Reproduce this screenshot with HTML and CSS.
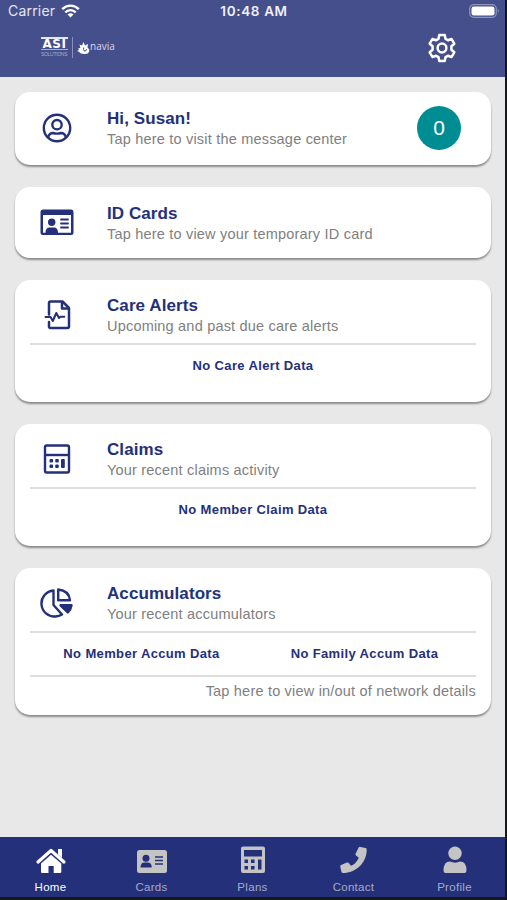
FILE: index.html
```html
<!DOCTYPE html>
<html lang="en">
<head>
<meta charset="utf-8">
<title>Home</title>
<link rel="stylesheet" href="styles.css">
</head>
<body>
<div class="app">
  <header class="header">
    <div class="status">
      <div class="carrier"><span>Carrier</span>
        <svg width="19" height="14" viewBox="0 0 19 14"><g fill="none" stroke="#fff" stroke-width="2.4"><path d="M1.2 5.2C6 .4 13 .4 17.800 5.200"/><path d="M4.300 8.300C7.400 5.400 11.600 5.400 14.700 8.300"/></g><path d="M6.500 10.500Q9.500 8 12.500 10.500L9.500 13.500Z" fill="#fff"/></svg>
      </div>
      <div class="time">10:48 AM</div>
      <div class="power"><svg width="31" height="14" viewBox="0 0 31 14"><rect x=".7" y=".7" width="26.600" height="12.600" rx="4" fill="none" stroke="#8e95bb" stroke-width="1.200"/><rect x="2.500" y="2.500" width="23" height="9" rx="2.300" fill="#fff"/><path d="M28.800 5q2 2 0 4z" fill="#8e95bb"/></svg></div>
    </div>
    <div class="brand-row">
      <div class="brand">
        <div class="asi"><b>ASI</b><small>SOLUTIONS</small></div>
        <div class="navia">
          <svg width="13" height="15" viewBox="0 0 13 15"><path d="M1 8.500 3.400 8 2.500 4.500 5 5.500 6.500 2 8 5.500 11 4 10.500 7.500Q13 9 12.300 11.500 11 14.500 7 14 3.500 14 1.800 11.800L0 11 2 10Z" fill="#fff"/><path d="M6.800 7.500q-1 2.400.5 3.500 2 .4 2.300-1.800" fill="none" stroke="#454f8b" stroke-width="1"/></svg>
          <span>navia</span>
        </div>
      </div>
      <svg class="gear" width="30" height="30" viewBox="0 0 30 30" fill="none" stroke="#fff" stroke-width="2.500" stroke-linejoin="round"><path d="M12.300 2h5.400l.8 3.800 2.400 1.400 3.700-1.200 2.700 4.700-2.900 2.600v3.400l2.900 2.600-2.700 4.700-3.700-1.200-2.400 1.400-.8 3.800h-5.400l-.8-3.800-2.400-1.400L5.400 24l-2.700-4.700 2.900-2.600v-3.400l-2.900-2.600L5.400 6l3.700 1.200 2.400-1.400z"/><circle cx="15" cy="15" r="4.400"/></svg>
    </div>
  </header>

  <main class="cards">
    <section class="card greeting">
      <div class="card-head">
        <svg class="icon" width="34" height="34" viewBox="0 0 34 34" fill="none" stroke="#24307a" stroke-width="2.400"><circle cx="17" cy="17" r="13.200"/><circle cx="17" cy="13.700" r="4.700"/><path d="M8 26.300q1.500-4.300 5-4.300 4 1.300 8 0 3.500 0 5 4.300"/></svg>
        <div class="copy"><h2>Hi, Susan!</h2><p>Tap here to visit the message center</p></div>
        <div class="count">0</div>
      </div>
    </section>

    <section class="card idcard">
      <div class="card-head">
        <svg class="icon" width="34" height="34" viewBox="0 0 34 34"><path fill="#24307a" fill-rule="evenodd" d="M3 4.500H31Q33.500 4.500 33.500 7V27.500Q33.500 30 31 30H3Q.5 30 .5 27.500V7Q.5 4.500 3 4.500ZM3 10V27.700H31V10Z"/><g fill="#24307a"><circle cx="11.700" cy="17.200" r="3.700"/><path d="M5.500 28q0-5.500 4-5.500h4.500q4 0 4 5.500z"/></g><path d="M21 14.500h7M21 18.500h7M21 22.500h7" stroke="#24307a" stroke-width="1.800" stroke-linecap="round"/></svg>
        <div class="copy"><h2>ID Cards</h2><p>Tap here to view your temporary ID card</p></div>
      </div>
    </section>

    <section class="card detail">
      <div class="card-head">
        <svg class="icon" width="34" height="34" viewBox="0 0 34 34" fill="none" stroke="#24307a" stroke-width="2.500" stroke-linejoin="round" stroke-linecap="round"><path d="M9 16.500V5Q9 3.500 10.500 3.500H22.500L29 10V28.500Q29 30 27.500 30H10.500Q9 30 9 28.500V24"/><path d="M22 4V10.500H28.500"/><path d="M5.500 19h5l2.300 4 3.500-8 2.700 5 1.300-1.200h4" stroke-width="2"/></svg>
        <div class="copy"><h2>Care Alerts</h2><p>Upcoming and past due care alerts</p></div>
      </div>
      <div class="notice"><strong>No Care Alert Data</strong></div>
    </section>

    <section class="card detail">
      <div class="card-head">
        <svg class="icon" width="34" height="34" viewBox="0 0 34 34"><g fill="none" stroke="#24307a" stroke-width="2.400"><rect x="5" y="3.500" width="24" height="27" rx="1.700"/><path d="M5 13h24"/></g><g fill="#24307a"><rect x="9.500" y="17" width="3.600" height="3.600" rx="1"/><rect x="15.200" y="17" width="3.600" height="3.600" rx="1"/><rect x="9.500" y="22.500" width="3.600" height="3.600" rx="1"/><rect x="15.200" y="22.500" width="3.600" height="3.600" rx="1"/><rect x="21" y="17" width="3.800" height="9.100" rx="1"/></g></svg>
        <div class="copy"><h2>Claims</h2><p>Your recent claims activity</p></div>
      </div>
      <div class="notice"><strong>No Member Claim Data</strong></div>
    </section>

    <section class="card accum">
      <div class="card-head">
        <svg class="icon" width="34" height="34" viewBox="0 0 34 34" fill="none" stroke="#24307a" stroke-width="2.400" stroke-linejoin="round"><path d="M13.500 4.500A13 13 0 0 0 15.500 30.500Q19 30.300 22 28.500L13.500 19Z"/><path d="M18.200 3.500V14.300H30Q29 4.500 18.200 3.500Z"/><path d="M20.500 19.300H31.500Q31 23.500 27.800 26.400Z" fill="#24307a"/></svg>
        <div class="copy"><h2>Accumulators</h2><p>Your recent accumulators</p></div>
      </div>
      <div class="notice split"><strong>No Member Accum Data</strong><strong>No Family Accum Data</strong></div>
      <p class="more">Tap here to view in/out of network details</p>
    </section>
  </main>

  <nav class="tabs">
    <a class="tab active"><svg width="32" height="30" viewBox="0 0 32 30"><path d="M3 17 16 5.500 29 17" fill="none" stroke="#fff" stroke-width="3.200" stroke-linecap="round" stroke-linejoin="round"/><path d="M23 4h4v9l-4-3.500zM6 18.500 16 9.800l10.300 8.700V27Q26.300 28 25 28H18.700V21h-5.200v7H7.300Q6 28 6 27Z" fill="#fff"/></svg><span>Home</span></a>
    <a class="tab"><svg width="32" height="30" viewBox="0 0 32 30"><rect x="1" y="5" width="30" height="23" rx="2.500" fill="#c4c4c4"/><g fill="#24307a"><circle cx="10" cy="13.300" r="3.500"/><path d="M4.500 22.500q0-5 4-5h3.200q4 0 4 5z"/></g><path d="M19 12h8M19 15.500h8M19 19h8" stroke="#24307a" stroke-width="1.600"/></svg><span>Cards</span></a>
    <a class="tab"><svg width="32" height="30" viewBox="0 0 32 30"><path fill="#c4c4c4" fill-rule="evenodd" d="M6 1.500H26Q28 1.500 28 3.500V26Q28 28 26 28H6Q4 28 4 26V3.500Q4 1.500 6 1.500ZM7 5V11.500H25V5ZM7.500 14.500v3.500h3.500v-3.500zM14 14.500v3.500h3.500v-3.500zM7.500 21v3.500h3.500v-3.500zM14 21v3.500h3.500v-3.500zM21 14.500v10h3.500v-10z"/></svg><span>Plans</span></a>
    <a class="tab"><svg width="32" height="30" viewBox="0 0 32 30"><path fill="#c4c4c4" d="M22.300 1.900 27.600 3Q28.700 3.300 28.700 4.500C28.700 18 18 28 5 28Q3.700 28 3.400 26.800L2.200 21.600Q2 20.400 3.100 19.900L8.800 17.500Q9.900 17.100 10.700 18L13 20.800Q18.500 18.300 20.800 12.700L18 10.500Q17.100 9.800 17.600 8.700L20.500 2.700Q21.100 1.700 22.300 1.900Z"/></svg><span>Contact</span></a>
    <a class="tab"><svg width="32" height="30" viewBox="0 0 32 30" fill="#c4c4c4"><circle cx="16" cy="8.300" r="6.700"/><path d="M4.500 25.500Q4.500 16.500 11 16.500q5 2.300 10 0Q27.500 16.500 27.500 25.500q0 2.500-2.200 2.500H6.700Q4.500 28 4.500 25.500Z"/></svg><span>Profile</span></a>
  </nav>
</div>
</body>
</html>
```
FILE: styles.css
```css
* { box-sizing: border-box; }

body {
  margin: 0;
  background: #15161a;
  font-family: "Liberation Sans", Arial, sans-serif;
}

svg { display: block; flex: none; }
h2, p { margin: 0; font-size: inherit; }

.app {
  width: 505px;
  height: 897px;
  display: flex;
  flex-direction: column;
  background: #e8e8e8;
}

.header {
  height: 77px;
  background: #454f8b;
  color: #fff;
}

.status {
  height: 22px;
  display: grid;
  grid-template-columns: 1fr auto 1fr;
  align-items: center;
  padding: 0 5px 0 8px;
}

.carrier {
  display: flex;
  align-items: center;
  gap: 6px;
  font: 14px/22px Inter, sans-serif;
  letter-spacing: 0.2px;
  color: #e4e6f1;
}

.time {
  font: 600 13.5px/22px Inter, sans-serif;
  letter-spacing: 0.65px;
  color: #f0f1f7;
}

.power { justify-self: end; }

.brand-row {
  height: 51px;
  display: flex;
  align-items: center;
  justify-content: space-between;
  padding: 0 48px 0 41px;
}

.brand { display: flex; align-items: center; }

.asi {
  width: 32px;
  height: 21px;
  padding-right: 4px;
  border-right: 1px solid #8b91b8;
  display: flex;
  flex-direction: column;
}

.asi b {
  width: 27px;
  height: 13px;
  border-top: 2px solid #e4e6f1;
  border-bottom: 1px solid #a9aecb;
  font: bold 12px/10px "DejaVu Sans", sans-serif;
  letter-spacing: 0.5px;
  text-align: center;
}

.asi small {
  margin-top: 2px;
  font-size: 5px;
  line-height: 5px;
  letter-spacing: -0.3px;
  color: #a9aecb;
}

.navia {
  display: flex;
  align-items: center;
  padding-left: 4px;
}

.navia span {
  font: 10px/12px "Open Sans", sans-serif;
  color: #d6d9e8;
  margin-top: -4px;
}

.cards {
  flex: 1;
  padding: 15px 14px 0 15px;
  display: flex;
  flex-direction: column;
  gap: 22px;
}

.card {
  background: #fff;
  border-radius: 15px;
  padding: 0 15px;
  box-shadow: 0 2px 2px rgba(0, 0, 0, 0.4);
}

.greeting { height: 73px; padding-top: 5px; }
.idcard { height: 71px; padding-top: 5px; }
.detail { height: 122px; }
.accum { height: 147px; }

.card-head {
  height: 63px;
  display: flex;
  align-items: center;
  padding: 8px 15px 0 10px;
}

.greeting .card-head,
.idcard .card-head { padding-top: 0; }

.icon,
.count { margin-bottom: 2px; }

.idcard .icon { margin-bottom: 4px; }

.copy { margin-left: 33px; flex: 1; }

.copy h2 {
  font-size: 17px;
  line-height: 21px;
  letter-spacing: 0.08px;
  color: #24307a;
}

.copy p,
.more {
  font-size: 14.5px;
  line-height: 21px;
  letter-spacing: 0.2px;
  color: #808080;
}

.count {
  width: 44px;
  height: 44px;
  border-radius: 50%;
  background: #008c93;
  color: #fff;
  font-size: 21px;
  line-height: 43px;
  text-align: center;
}

.notice {
  height: 44px;
  border-top: 2px solid #dedede;
  display: flex;
  justify-content: center;
  align-items: center;
  padding-bottom: 2px;
}

.notice strong {
  font-size: 13px;
  letter-spacing: 0.36px;
  color: #24307a;
}

.split strong { flex: 1; text-align: center; }

.more {
  border-top: 2px solid #dedede;
  padding-top: 4px;
  text-align: right;
}

.tabs {
  height: 60px;
  background: #24307a;
  display: grid;
  grid-template-columns: repeat(5, 1fr);
}

.tab {
  padding-top: 8px;
  display: flex;
  flex-direction: column;
  align-items: center;
  gap: 5px;
  font-size: 11.5px;
  line-height: 14px;
  letter-spacing: 0.3px;
  color: #a6abc6;
}

.active { color: #fff; }
```
